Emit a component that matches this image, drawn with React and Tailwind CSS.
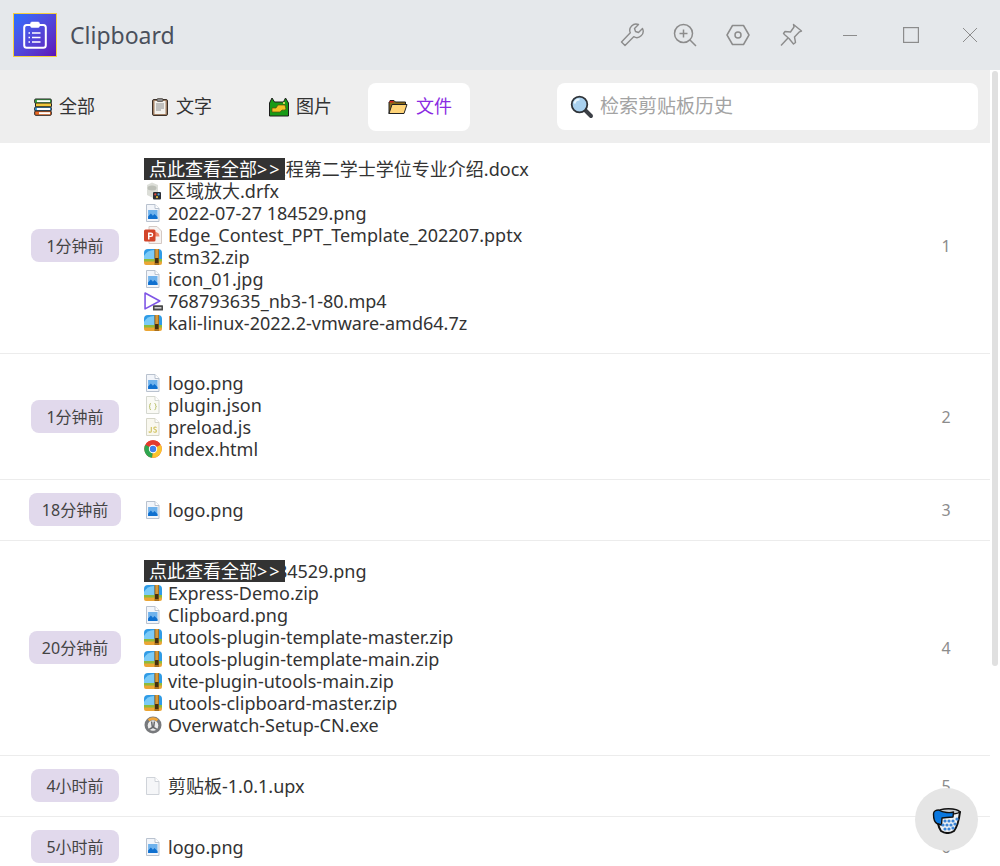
import React from "react";

const FONT = { fontFamily: '"Noto Sans", "Noto Sans CJK SC", sans-serif' };

function PageBase({ children, fill = "#f4f6f9", stroke = "#c9ced6" }) {
  return (
    <svg viewBox="0 0 18 18" className="w-[18px] h-[18px] shrink-0">
      <path d="M2.500 .5h8.500L15 4.500V17.500H2.500z" fill={fill} stroke={stroke} />
      <path d="M11 .5V4.500h4" fill="#fff" stroke={stroke} />
      {children}
    </svg>
  );
}

const ImageIcon = () => (
  <PageBase fill="#f2f5fa" stroke="#b9c2cf">
    <rect x="4.100" y="6" width="9.400" height="9" fill="#6fb2ec" />
    <path d="M4.100 15v-2.500l2.800-3 2 2.200 1.600-1.600 3 2.900v2z" fill="#0f70cf" />
  </PageBase>
);

const ZipIcon = () => (
  <svg viewBox="0 0 18 18" className="w-[18px] h-[18px] shrink-0">
    <path d="M0 5q0-4 4-4h10q4 0 4 4v8H0z" fill="#2f9be6" />
    <path d="M0 8q3-6 10-6v9H0z" fill="#7ccbf7" />
    <rect x="0" y="11" width="18" height="3" fill="#8fbb3c" />
    <path d="M0 13.500h18V15q0 2-2 2H2q-2 0-2-2z" fill="#eba635" />
    <rect x="10.500" y="1" width="4.500" height="16" fill="#a9701f" />
    <rect x="11.500" y="1" width="2.500" height="9" fill="#d49a3c" />
    <rect x="11" y="10" width="3.500" height="5" rx=".5" fill="#43300f" />
  </svg>
);

const DrfxIcon = () => (
  <svg viewBox="0 0 18 18" className="w-[18px] h-[18px] shrink-0">
    <path d="M3 3l5-2.400 6 2.400v9l-5 4-6-3z" fill="#dcded8" />
    <ellipse cx="8" cy="6" rx="4.500" ry="2.500" fill="#bcbfb7" />
    <rect x="9" y="10" width="8" height="7.500" rx="1" fill="#2b2f36" />
    <circle cx="11.300" cy="12.400" r="1.100" fill="#e24a3b" />
    <circle cx="14.600" cy="12.400" r="1.100" fill="#4aa3e2" />
    <circle cx="13" cy="15.200" r="1.100" fill="#e2b93b" />
  </svg>
);

const PptIcon = () => (
  <svg viewBox="0 0 18 18" className="w-[18px] h-[18px] shrink-0">
    <path d="M5 .5h8L17.500 5v12.500H5z" fill="#f7f3f1" stroke="#d4c9c4" />
    <path d="M11 6a4.500 4.500 0 0 1 4.500 4.500H11z" fill="#ef8a6e" />
    <rect x="0" y="3.500" width="11.500" height="12" rx="1.500" fill="#d2452a" />
    <path d="M4 6.500h3a2.200 2.200 0 0 1 0 4.600H5.500v2.500H4zM5.500 8v1.700H7a.85.85 0 0 0 0-1.700z" fill="#fff" />
  </svg>
);

const VideoIcon = () => (
  <svg viewBox="0 0 18 18" className="w-[19px] h-[19px] shrink-0">
    <path d="M1 1v15l14-7.500z" fill="#fff" stroke="#7e55e6" strokeWidth="1.500" strokeLinejoin="round" />
    <rect x="8.500" y="12.500" width="9.500" height="5" rx=".5" fill="#4a4a4a" />
    <rect x="10" y="14.300" width="6.500" height="1.400" fill="#ddd" />
  </svg>
);

const JsonIcon = () => (
  <PageBase fill="#fafaf5" stroke="#d5d8d0">
    <path d="M7 7.500q-1.200 0-1.200 1.300v1q0 .8-.7.800.7 0 .7.800v1q0 1.300 1.200 1.300M10.500 7.500q1.200 0 1.200 1.300v1q0 .8.700.800-.7 0-.7.800v1q0 1.300-1.200 1.300" fill="none" stroke="#b9bf6a" strokeWidth="1" />
  </PageBase>
);

const JsIcon = () => (
  <PageBase fill="#f9f8ef" stroke="#d6d6c8">
    <path d="M7.300 9v4.300q0 1-1.100 1t-1.300-.8M12.500 9.700q-.6-.7-1.400-.7-1.300 0-1.300 1.200 0 .9 1.300 1.300t1.300 1.500q0 1.300-1.400 1.300-1 0-1.600-.8" fill="none" stroke="#cfc05a" strokeWidth="1.100" />
  </PageBase>
);

const ChromeIcon = () => (
  <svg viewBox="0 0 18 18" className="w-[18px] h-[18px] shrink-0">
    <circle cx="9" cy="9" r="8.700" fill="#e33b2e" />
    <path d="M9 9L16.600 4.700A8.700 8.700 0 0 1 8 17.650z" fill="#fbc52d" />
    <path d="M9 9L8 17.650A8.700 8.700 0 0 1 1.400 4.700z" fill="#2fa650" />
    <path d="M1.400 4.700A8.700 8.700 0 0 1 16.600 4.700H9z" fill="#e33b2e" />
    <circle cx="9" cy="9" r="4.200" fill="#fff" />
    <circle cx="9" cy="9" r="3.200" fill="#3f80ea" />
  </svg>
);

const OverwatchIcon = () => (
  <svg viewBox="0 0 18 18" className="w-[18px] h-[18px] shrink-0">
    <circle cx="9" cy="9" r="8.500" fill="#77797c" />
    <path d="M3.700 3.300Q9-.8 14.300 3.300L12.600 5.200Q9 2.800 5.400 5.200z" fill="#f0a63a" />
    <circle cx="9" cy="9.500" r="5.300" fill="#ececec" />
    <path d="M7.600 5.500l.8 6-3.300 1.800M10.400 5.500l-.8 6 3.300 1.800" fill="none" stroke="#66686b" strokeWidth="1.500" />
  </svg>
);

const BlankIcon = () => <PageBase fill="#f5f6f8" stroke="#cfd3d9" />;

const icons = {
  png: ImageIcon, zip: ZipIcon, drfx: DrfxIcon, ppt: PptIcon, mp4: VideoIcon,
  json: JsonIcon, js: JsIcon, html: ChromeIcon, exe: OverwatchIcon, upx: BlankIcon,
};

const rows = [
  {
    time: "1分钟前", n: 1, pad: "pt-[10px] pb-[14px]", badge: "-mt-px", num: "", more: true,
    files: [
      ["docx", "2022 年软件工程第二学士学位专业介绍.docx"],
      ["drfx", "区域放大.drfx"],
      ["png", "2022-07-27 184529.png"],
      ["ppt", "Edge_Contest_PPT_Template_202207.pptx"],
      ["zip", "stm32.zip"],
      ["png", "icon_01.jpg"],
      ["mp4", "768793635_nb3-1-80.mp4"],
      ["zip", "kali-linux-2022.2-vmware-amd64.7z"],
    ],
  },
  {
    time: "1分钟前", n: 2, pad: "pt-[13px] pb-[14px]", badge: "mt-px", num: "mt-[2px]",
    files: [["png", "logo.png"], ["json", "plugin.json"], ["js", "preload.js"], ["html", "index.html"]],
  },
  { time: "18分钟前", n: 3, pad: "py-[14px]", badge: "-mt-px", num: "", files: [["png", "logo.png"]] },
  {
    time: "20分钟前", n: 4, pad: "py-[14px]", badge: "-mt-px", num: "", more: true,
    files: [
      ["png", "2022-07-27 184529.png"],
      ["zip", "Express-Demo.zip"],
      ["png", "Clipboard.png"],
      ["zip", "utools-plugin-template-master.zip"],
      ["zip", "utools-plugin-template-main.zip"],
      ["zip", "vite-plugin-utools-main.zip"],
      ["zip", "utools-clipboard-master.zip"],
      ["exe", "Overwatch-Setup-CN.exe"],
    ],
  },
  { time: "4小时前", n: 5, pad: "py-[14px]", badge: "-mt-px", num: "", files: [["upx", "剪贴板-1.0.1.upx"]] },
  { time: "5小时前", n: 6, pad: "py-[14px]", badge: "-mt-px", num: "", files: [["png", "logo.png"]] },
];

function FileLine({ kind, name }) {
  const Icon = icons[kind];
  return (
    <div className="flex items-center h-[22px] whitespace-nowrap">
      <span className="w-[24px] shrink-0">{Icon ? <Icon /> : null}</span>
      <span>{name}</span>
    </div>
  );
}

function Row({ row }) {
  return (
    <div className={`flex items-center shrink-0 border-b border-[#ececec] ${row.pad}`}>
      <div className="w-[150px] shrink-0 flex justify-center">
        <span className={`min-w-[88px] h-[33px] px-[13px] rounded-lg bg-[#e1d9ec] text-[#444] text-[16px] flex items-center justify-center whitespace-nowrap ${row.badge}`}>
          {row.time}
        </span>
      </div>
      <div className="relative flex-1 -ml-[6px] py-[5px] text-[18px] text-[#333]">
        {row.files.map((f, i) => (
          <FileLine key={i} kind={f[0]} name={f[1]} />
        ))}
        {row.more && (
          <div className="absolute left-0 top-[5px] w-[141px] h-[22px] bg-[#333] text-white text-[18px] leading-[22px] pl-[5px] whitespace-nowrap">
            点此查看全部<span className="tracking-[2px]">&gt;&gt;</span>
          </div>
        )}
      </div>
      <div className={`w-[88px] shrink-0 text-center text-[16px] leading-[22px] text-[#8c8c8c] ${row.num}`}>{row.n}</div>
    </div>
  );
}

const BooksIcon = () => (
  <svg viewBox="0 0 18 18" className="w-[18px] h-[18px]">
    <rect x=".7" y="1" width="16.600" height="4.400" rx="1" fill="#3fae49" stroke="#222" />
    <rect x="3" y="2.200" width="13" height="2" fill="#fff" />
    <rect x="1.500" y="5" width="16" height="4" rx="1" fill="#f2c83a" stroke="#222" />
    <rect x=".7" y="9" width="16.600" height="4" rx="1" fill="#3f9fe0" stroke="#222" />
    <rect x="3" y="10" width="13" height="2" fill="#fff" />
    <rect x=".7" y="13" width="16.600" height="4.300" rx="1" fill="#ea6a25" stroke="#222" />
    <rect x="5" y="14.200" width="11" height="2" fill="#fff" />
  </svg>
);
const ClipIcon = () => (
  <svg viewBox="0 0 18 18" className="w-[18px] h-[18px]">
    <rect x="1.500" y="1.500" width="15" height="16" rx="1.500" fill="#a07f63" stroke="#3b3029" />
    <rect x="3.500" y="3" width="11" height="13" fill="#f3f1ec" />
    <rect x="6" y=".5" width="6" height="3" rx="1" fill="#8b8b8b" stroke="#3b3029" strokeWidth=".6" />
    <path d="M5 6h8M5 8h8M5 10h8M5 12h5" stroke="#8f8f8f" />
  </svg>
);
const PictureIcon = () => (
  <svg viewBox="0 0 20 20" className="w-[20px] h-[20px]">
    <path d="M.5 6l2.500-5 2.500 4h9l2-4 3 5v13H.5z" fill="#189a16" stroke="#1c1c1c" />
    <path d="M3 11h4l2-3h7l1 4q-1 1.500-4 1l-2 2H3z" fill="#f2c326" stroke="#5e4a10" strokeWidth=".7" />
    <circle cx="15" cy="6" r="1.100" fill="#f5e46a" />
  </svg>
);
const FolderIcon = () => (
  <svg viewBox="0 0 20 16" className="w-[20px] h-[16px] mr-px">
    <path d="M1 14.500V3h1V1.500h4L7.500 3h10v3H4.500z" fill="#8b6a18" stroke="#222" />
    <path d="M1.500 2h4v1.500h-4z" fill="#d01d1d" />
    <path d="M1 14.500L4 5.500h15L16 14.500z" fill="#ffd478" stroke="#222" strokeLinejoin="round" />
  </svg>
);
const MagnifierIcon = () => (
  <svg viewBox="0 0 24 24" className="w-[24px] h-[24px]">
    <path d="M14.500 14.500L21 21" stroke="#3b3f45" strokeWidth="4" strokeLinecap="round" />
    <circle cx="9.500" cy="9.500" r="7.800" fill="#a9d1ef" stroke="#2f3338" strokeWidth="1.800" />
    <path d="M4.500 8.500a5 5 0 0 1 5-4" stroke="#e8f5fd" strokeWidth="2" fill="none" />
  </svg>
);

const tabs = [
  { label: "全部", Icon: BooksIcon, cls: "px-[20px] text-[#333]" },
  { label: "文字", Icon: ClipIcon, cls: "px-[20px] text-[#333]" },
  { label: "图片", Icon: PictureIcon, cls: "px-[20px] text-[#333] ml-px" },
  { label: "文件", Icon: FolderIcon, cls: "pl-[20px] pr-[18px] bg-white text-[#8a2be2]" },
];

const Wrench = () => (
  <svg viewBox="0 0 24 24" className="w-[24px] h-[24px]" fill="none" stroke="#8c8c8c" strokeWidth="1.400" strokeLinejoin="round">
    <path d="M22.500 5.500l-4 4-3-1-1-3 4-4a6.300 6.300 0 0 0-8.200 8.300L1.500 19l3.500 3.500 8.700-8.800a6.300 6.300 0 0 0 8.800-8.200z" />
  </svg>
);
const ZoomPlus = () => (
  <svg viewBox="0 0 24 24" className="w-[24px] h-[24px]" fill="none" stroke="#8c8c8c" strokeWidth="1.500">
    <circle cx="10.500" cy="10.500" r="9" />
    <path d="M10.500 6.500v8M6.500 10.500h8M17 17l6 6" />
  </svg>
);
const HexNut = () => (
  <svg viewBox="0 0 24 24" className="w-[24px] h-[24px]" fill="none" stroke="#8c8c8c" strokeWidth="1.500">
    <path d="M6.500 2.500h11L23 12l-5.500 9.500h-11L1 12z" strokeLinejoin="round" />
    <circle cx="12" cy="12" r="3" />
  </svg>
);
const PinIcon = () => (
  <svg viewBox="0 0 24 24" className="w-[24px] h-[24px]" fill="none" stroke="#8c8c8c" strokeWidth="1.400" strokeLinejoin="round">
    <path d="M14.500 1.500l8 6.500-2 .8-5 5.200 1 5.500-2 1.500-4.500-5.500-4-3.500-1.500-1.500 1.500-2 5.500.5 3.500-5z" />
    <path d="M9 15l-7 7.500" />
  </svg>
);

function BasketIcon() {
  return (
    <svg viewBox="0 0 30 28" className="w-[30px] h-[28px]">
      <path d="M5 6c0 8 1 15 4 19 4 2.500 9 2.500 13 0 3-4 5-11 6-19z" fill="#eef1f4" stroke="#111" strokeWidth="2" strokeLinejoin="round" />
      <path d="M5 6c3-4.500 20-4.500 23 0-4 3-19 3-23 0z" fill="#c8ccd1" stroke="#111" strokeWidth="1.500" />
      <path d="M1.500 8c0-3 3-4 5-4 5 3 12 3 15 2l-.5 5q-7 .5-11 1l-.5 7q-2-.5-4.500-1.500C2 16 1.500 12 1.500 8z" fill="#0a78e0" stroke="#111" strokeWidth="1.400" strokeLinejoin="round" />
      {[[13, 15], [17, 15], [21, 15], [25, 13], [11, 19], [15, 19], [19, 19], [23, 18], [13, 23], [17, 23], [21, 22]].map(([x, y]) => (
        <circle key={`${x}-${y}`} cx={x} cy={y} r="1.600" fill="#3d86d6" />
      ))}
    </svg>
  );
}

export default function App() {
  return (
    <div className="relative w-[1000px] h-[866px] overflow-hidden flex flex-col bg-white" style={FONT}>
      <header className="h-[70px] shrink-0 bg-[#e5e8eb] flex items-center">
        <div className="ml-[13px] w-[44px] h-[44px] border border-[#f5cf3f] bg-gradient-to-br from-[#2570ff] to-[#5d10b8] flex items-center justify-center">
          <svg viewBox="0 0 24 28" className="w-[24px] h-[28px]" fill="none" stroke="#fff">
            <rect x="1.200" y="4" width="21.600" height="22.800" rx="2.500" strokeWidth="2" />
            <rect x="7.500" y="1" width="9" height="5.500" rx="1.500" fill="#fff" strokeWidth=".5" />
            <path d="M9 12h8.500M9 16.500h8.500M9 21h8.500M5.500 12h1.500M5.500 16.500h1.500M5.500 21h1.500" strokeWidth="1.600" />
          </svg>
        </div>
        <div className="ml-[13px] text-[23px] text-[#4a505c]">Clipboard</div>
        <div className="ml-auto flex items-center">
          <div className="flex items-center gap-[29px] mr-[40px]">
            <Wrench />
            <ZoomPlus />
            <HexNut />
            <PinIcon />
          </div>
          <div className="flex items-center mr-[23px]">
            <svg viewBox="0 0 14 14" className="w-[14px] h-[14px]" stroke="#8c8c8c"><path d="M0 7.500h14" /></svg>
            <svg viewBox="0 0 16 16" className="w-[16px] h-[16px] ml-[46px]" fill="none" stroke="#8c8c8c" strokeWidth="1.200"><rect x=".6" y=".6" width="14.800" height="14.800" /></svg>
            <svg viewBox="0 0 14 14" className="w-[14px] h-[14px] ml-[44px]" stroke="#8c8c8c"><path d="M0 0l14 14M14 0L0 14" /></svg>
          </div>
        </div>
      </header>

      <div className="flex-1 flex min-h-0">
        <div className="w-[990px] shrink-0 flex flex-col min-h-0">
          <div className="h-[73px] shrink-0 bg-[#eeeeee] flex items-center">
            <div className="ml-[14px] flex items-center gap-[16px]">
              {tabs.map(({ label, Icon, cls }) => (
                <div key={label} className={`h-[48px] rounded-lg flex items-center gap-[7px] text-[18px] whitespace-nowrap ${cls}`}>
                  <Icon />
                  <span>{label}</span>
                </div>
              ))}
            </div>
            <div className="ml-auto mr-[12px] w-[421px] h-[47px] bg-white rounded-lg flex items-center pl-[13px] gap-[6px]">
              <MagnifierIcon />
              <span className="text-[19px] text-[#a3a3a3]">检索剪贴板历史</span>
            </div>
          </div>
          <div className="flex-1 flex flex-col overflow-hidden min-h-0">
            {rows.map((r) => (
              <Row key={r.n} row={r} />
            ))}
          </div>
        </div>
        <div className="w-[10px] shrink-0 bg-white pl-[2px] pt-[1px]">
          <div className="w-[6px] h-[595px] rounded-[3px] bg-[#e0e0e0]" />
        </div>
      </div>

      <div className="absolute left-[915px] top-[788px] w-[63px] h-[63px] rounded-full bg-[#e5e5e5] flex items-center justify-center">
        <BasketIcon />
      </div>
    </div>
  );
}
